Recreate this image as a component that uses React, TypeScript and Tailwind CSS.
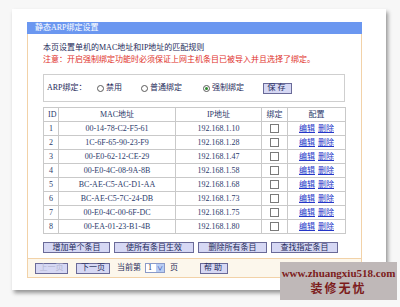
import React from 'react';

const rows = [
  { id: 1, mac: '00-14-78-C2-F5-61', ip: '192.168.1.10' },
  { id: 2, mac: '1C-6F-65-90-23-F9', ip: '192.168.1.28' },
  { id: 3, mac: '00-E0-62-12-CE-29', ip: '192.168.1.47' },
  { id: 4, mac: '00-E0-4C-08-9A-8B', ip: '192.168.1.58' },
  { id: 5, mac: 'BC-AE-C5-AC-D1-AA', ip: '192.168.1.68' },
  { id: 6, mac: 'BC-AE-C5-7C-24-DB', ip: '192.168.1.73' },
  { id: 7, mac: '00-E0-4C-00-6F-DC', ip: '192.168.1.75' },
  { id: 8, mac: '00-EA-01-23-B1-4B', ip: '192.168.1.80' },
];

const font = { fontFamily: '"Liberation Serif", "Noto Sans CJK SC", serif' };

const Radio = ({ checked, label }: { checked?: boolean; label: string }) => (
  <span className="flex items-center gap-[2px]">
    <span className="w-[7px] h-[7px] rounded-full border border-[#5a5a5a] bg-white flex items-center justify-center">
      {checked && <span className="w-[3px] h-[3px] rounded-full bg-[#2e8a2e]" />}
    </span>
    <span>{label}</span>
  </span>
);

const Btn = ({ children, className = '', disabled }: { children: React.ReactNode; className?: string; disabled?: boolean }) => (
  <span
    className={`h-[11px] flex items-center justify-center border border-[#6a6a98] bg-[#d6d8f4] leading-none ${
      disabled ? 'text-[#b4b6d0]' : 'text-[#1e2a5a]'
    } ${className}`}
  >
    {children}
  </span>
);

const cell = 'border border-[#c9c9c9] h-[14px] p-0 leading-none';

export default function App() {
  return (
    <div className="w-[400px] h-[307px] bg-[#f7f7f7] overflow-hidden relative" style={font}>
      <div className="pt-[9px] pl-[12px]">
        <div className="w-[374px] h-[281px] bg-white shadow-[2px_3px_4px_rgba(0,0,0,0.4)] pt-[13px] pl-[15px]">
          <div className="w-[335px] text-[8px]">
            <div className="h-[12px] bg-[#6b97f0] text-white pl-[8px] leading-[12px]">静态ARP绑定设置</div>
            <div className="border-l border-r border-b border-[#f2d2a8]">
              <div className="pl-[15px] pt-[8px]">
                <p className="leading-[12px] text-[#1e2a5a]">本页设置单机的MAC地址和IP地址的匹配规则</p>
                <p className="leading-[12px] text-[#e0302a]">注意：开启强制绑定功能时必须保证上网主机条目已被导入并且选择了绑定。</p>

                <div className="mt-[8px] w-[302px] h-[28px] border border-[#cfcfcf] flex items-center text-[#1e2a5a]">
                  <span className="ml-[3px] w-[50px]">ARP绑定：</span>
                  <span className="w-[44px]"><Radio label="禁用" /></span>
                  <span className="w-[62px]"><Radio label="普通绑定" /></span>
                  <span className="w-[60px]"><Radio checked label="强制绑定" /></span>
                  <Btn className="w-[29px] tracking-[2px]">保存</Btn>
                </div>

                <table className="mt-[5px] w-[302px] border-collapse text-[#2b3a6b] table-fixed">
                  <colgroup>
                    <col className="w-[15px]" />
                    <col className="w-[117px]" />
                    <col className="w-[86px]" />
                    <col className="w-[26px]" />
                    <col className="w-[58px]" />
                  </colgroup>
                  <thead>
                    <tr>
                      <td className={`${cell} pl-[4px]`}>ID</td>
                      <td className={`${cell} text-center`}>MAC地址</td>
                      <td className={`${cell} text-center`}>IP地址</td>
                      <td className={`${cell} text-center`}>绑定</td>
                      <td className={`${cell} text-center`}>配置</td>
                    </tr>
                  </thead>
                  <tbody>
                    {rows.map((r) => (
                      <tr key={r.id}>
                        <td className={`${cell} pl-[5px]`}>{r.id}</td>
                        <td className={`${cell} text-center`}>{r.mac}</td>
                        <td className={`${cell} text-center`}>{r.ip}</td>
                        <td className={cell}>
                          <span className="mx-auto block w-[9px] h-[9px] border border-[#7a7a7a] bg-white" />
                        </td>
                        <td className={`${cell} text-center`}>
                          <span className="text-[#2436c8] underline">编辑</span>
                          <span className="ml-[3px] text-[#2436c8] underline">删除</span>
                        </td>
                      </tr>
                    ))}
                  </tbody>
                </table>

                <div className="mt-[8px] flex gap-[4px]">
                  <Btn className="w-[67px]">增加单个条目</Btn>
                  <Btn className="w-[80px]">使所有条目生效</Btn>
                  <Btn className="w-[69px]">删除所有条目</Btn>
                  <Btn className="w-[67px]">查找指定条目</Btn>
                </div>
              </div>

              <div className="mt-[5px] border-t border-[#f2d2a8] bg-[#fcf7ec] h-[19px] flex items-center pl-[7px] text-[#1e2a5a]">
                <Btn disabled className="w-[33px]">上一页</Btn>
                <Btn className="ml-[8px] w-[34px]">下一页</Btn>
                <span className="ml-[7px]">当前第</span>
                <span className="ml-[4px] w-[20px] h-[10px] border border-[#8a9ac8] bg-white flex items-center">
                  <span className="pl-[2px] flex-1 leading-none">1</span>
                  <span className="w-[8px] h-full bg-[#b8cdf4] flex items-center justify-center text-[#2040a0] text-[6px] leading-none">∨</span>
                </span>
                <span className="ml-[5px]">页</span>
                <Btn className="ml-[22px] w-[28px] tracking-[2px]">帮助</Btn>
              </div>
            </div>
          </div>
        </div>
      </div>

      <div className="absolute left-[280px] top-[262px] w-[117px] h-[38px] bg-[#bfb8b8] flex flex-col items-center justify-center font-bold text-[#7c1c1c]">
        <span className="text-[11px] leading-[14px]" style={{ fontFamily: '"Liberation Serif", serif' }}>www.zhuangxiu518.com</span>
        <span className="text-[12px] leading-[16px] tracking-[2px]" style={{ fontFamily: '"Noto Sans CJK SC", sans-serif' }}>装修无忧</span>
      </div>
    </div>
  );
}
